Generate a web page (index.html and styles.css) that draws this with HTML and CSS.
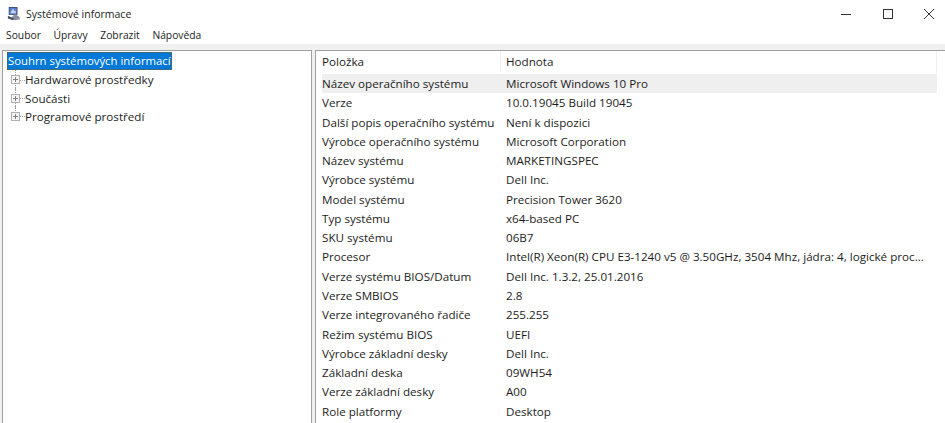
FILE: index.html
```html
<!DOCTYPE html>
<html lang="cs">
<head>
<meta charset="utf-8">
<title>Systémové informace</title>
<link rel="stylesheet" href="styles.css">
</head>
<body>
<div class="window">
  <header class="titlebar">
    <svg class="app-icon" width="14" height="14" viewBox="0 0 16 16">
      <rect x="2" y="0" width="10" height="9" fill="#3b4a7a"/>
      <rect x="3" y="1" width="8" height="7" fill="#5b7fd0"/>
      <path d="M4 6l3-4 2 3 1-1v3H4z" fill="#c8d4ee"/>
      <path d="M9 8l5 3 1 3-6 1-5-2z" fill="#8a8fa0"/>
      <path d="M1 10l7 3-1 2-6-2z" fill="#4a4f66"/>
    </svg>
    <span class="title">Systémové informace</span>
    <div class="controls">
      <svg width="10" height="10" viewBox="0 0 10 10"><path d="M0 5.5h10" stroke="#333" fill="none"/></svg>
      <svg width="10" height="10" viewBox="0 0 10 10"><rect x=".5" y=".5" width="9" height="9" stroke="#333" stroke-width="1" fill="none"/></svg>
      <svg width="10" height="10" viewBox="0 0 10 10"><path d="M0 0l10 10M10 0L0 10" stroke="#333" fill="none"/></svg>
    </div>
  </header>
  <nav class="menubar">
    <span>Soubor</span><span>Úpravy</span><span>Zobrazit</span><span>Nápověda</span>
  </nav>
  <main class="panes">
    <section class="tree">
      <div class="tree-root"><span class="selected">Souhrn systémových informací</span></div>
      <div class="tree-item"><span class="exp"></span>Hardwarové prostředky</div>
      <div class="tree-item"><span class="exp"></span>Součásti</div>
      <div class="tree-item last"><span class="exp"></span>Programové prostředí</div>
    </section>
    <section class="list">
      <div class="row head"><span class="c1">Položka</span><span class="c2">Hodnota</span></div>
      <div class="row current"><span class="c1">Název operačního systému</span><span class="c2">Microsoft Windows 10 Pro</span></div>
      <div class="row"><span class="c1">Verze</span><span class="c2">10.0.19045 Build 19045</span></div>
      <div class="row"><span class="c1">Další popis operačního systému</span><span class="c2">Není k dispozici</span></div>
      <div class="row"><span class="c1">Výrobce operačního systému</span><span class="c2">Microsoft Corporation</span></div>
      <div class="row"><span class="c1">Název systému</span><span class="c2">MARKETINGSPEC</span></div>
      <div class="row"><span class="c1">Výrobce systému</span><span class="c2">Dell Inc.</span></div>
      <div class="row"><span class="c1">Model systému</span><span class="c2">Precision Tower 3620</span></div>
      <div class="row"><span class="c1">Typ systému</span><span class="c2">x64-based PC</span></div>
      <div class="row"><span class="c1">SKU systému</span><span class="c2">06B7</span></div>
      <div class="row"><span class="c1">Procesor</span><span class="c2">Intel(R) Xeon(R) CPU E3-1240 v5 @ 3.50GHz, 3504 Mhz, jádra: 4, logické proc...</span></div>
      <div class="row"><span class="c1">Verze systému BIOS/Datum</span><span class="c2">Dell Inc. 1.3.2, 25.01.2016</span></div>
      <div class="row"><span class="c1">Verze SMBIOS</span><span class="c2">2.8</span></div>
      <div class="row"><span class="c1">Verze integrovaného řadiče</span><span class="c2">255.255</span></div>
      <div class="row"><span class="c1">Režim systému BIOS</span><span class="c2">UEFI</span></div>
      <div class="row"><span class="c1">Výrobce základní desky</span><span class="c2">Dell Inc.</span></div>
      <div class="row"><span class="c1">Základní deska</span><span class="c2">09WH54</span></div>
      <div class="row"><span class="c1">Verze základní desky</span><span class="c2">A00</span></div>
      <div class="row"><span class="c1">Role platformy</span><span class="c2">Desktop</span></div>
    </section>
  </main>
</div>
</body>
</html>
```
FILE: styles.css
```css
* { box-sizing: border-box; }
html, body { margin: 0; height: 100%; overflow: hidden; }
body {
  background: #fff;
  color: #1c1c1c;
  font-family: "Open Sans", "Noto Sans", sans-serif;
  font-size: 11.65px;
}
.window { display: flex; flex-direction: column; height: 423px; }
.titlebar { display: flex; align-items: center; height: 27px; padding-left: 7px; }
.app-icon { margin-right: 5px; }
.title { font-size: 10.5px; }
.controls { margin-left: auto; display: flex; gap: 31.5px; padding-right: 11px; }
.menubar { display: flex; gap: 12.7px; height: 17px; padding-left: 6px; font-size: 10.3px; line-height: 17px; }
.panes {
  flex: 1;
  display: flex;
  gap: 3px;
  background: #f0f0f0;
  padding: 6px 0 0 2px;
  min-height: 0;
}
.tree {
  width: 310px;
  background: #fff;
  border: 1px solid #a0a0a0;
  border-bottom: 0;
  padding-top: 1px;
}
.tree-root { height: 18.6px; padding-left: 4px; }
.selected {
  display: inline-block;
  height: 18px;
  font-size: 11.35px;
  line-height: 18px;
  padding: 0 1px;
  background: #0078d7;
  color: #fff;
  outline: 1px dotted #7a5a20;
  outline-offset: -1px;
}
.tree-item { position: relative; display: flex; align-items: center; height: 18.4px; padding-left: 8px; }
.tree-item::before {
  content: "";
  position: absolute;
  left: 12px;
  top: -1px;
  height: 10px;
  width: 9px;
  border-left: 1px dotted #a0a0a0;
  border-bottom: 1px dotted #a0a0a0;
}
.tree-item:not(.last)::after {
  content: "";
  position: absolute;
  left: 12px;
  top: 9px;
  height: 10px;
  border-left: 1px dotted #a0a0a0;
}
.exp {
  position: relative;
  z-index: 1;
  width: 9px;
  height: 9px;
  margin-right: 5px;
  border: 1px solid #b0b0b0;
  background: linear-gradient(#808080, #808080) center/5px 1px no-repeat,
              linear-gradient(#808080, #808080) center/1px 5px no-repeat, #f4f4f4;
}
.list {
  flex: 1;
  background: #fff;
  border: 1px solid #a0a0a0;
  border-width: 1px 0 0 1px;
  padding-left: 6px;
  padding-right: 8px;
  min-width: 0;
}
.row { display: flex; align-items: center; height: 19.29px; white-space: nowrap; }
.row.head { height: 22.8px; padding-bottom: 1px; }
.row.current { background: #efefef; }
.c1 { width: 178px; flex: none; }
.c2 { padding-left: 6px; }
.head .c2 { flex: 1; border-left: 1px solid #f0f0f0; border-right: 1px solid #f0f0f0; height: 100%; display: flex; align-items: center; padding-left: 5px; }
```
